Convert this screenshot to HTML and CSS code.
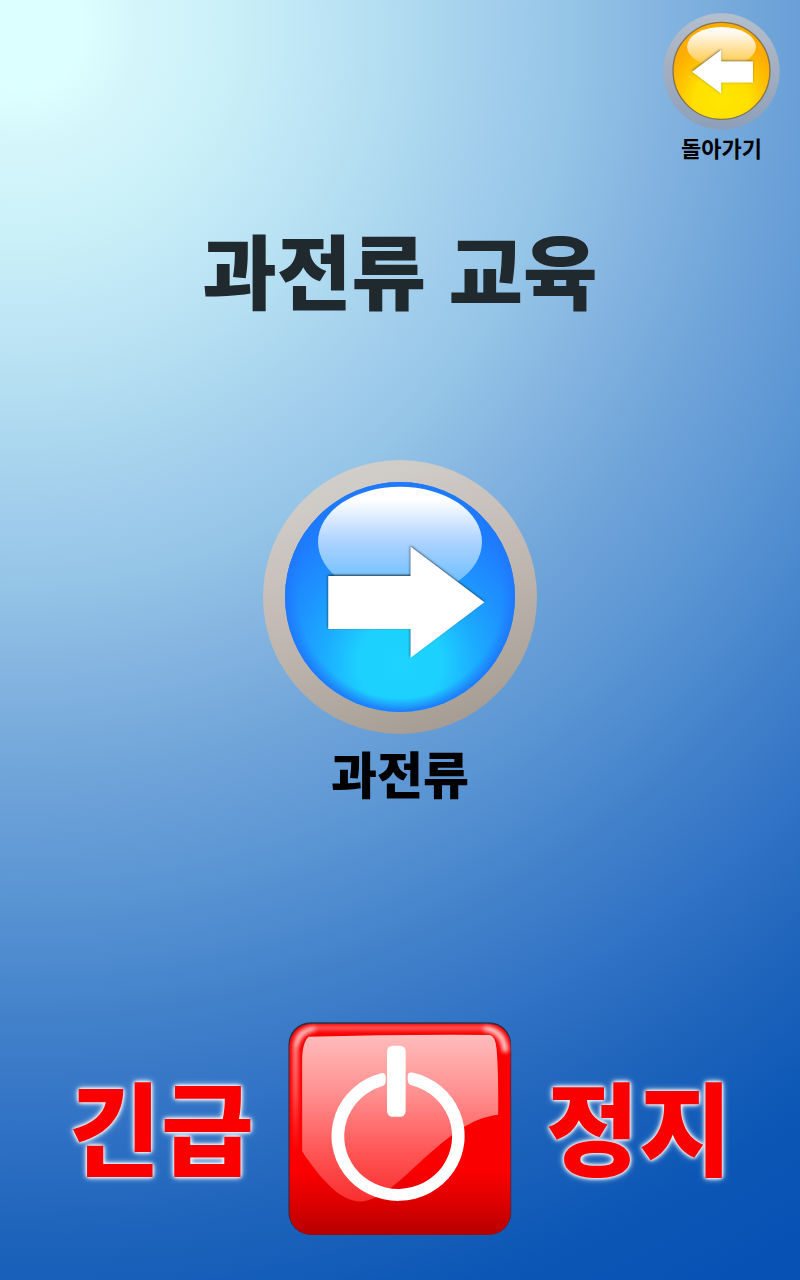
FILE: index.html
```html
<!DOCTYPE html>
<html lang="ko">
<head>
<meta charset="utf-8">
<meta name="viewport" content="width=device-width, initial-scale=1">
<title>과전류 교육</title>
<link rel="stylesheet" href="styles.css">
</head>
<body>
<div class="screen">
  <header class="top">
    <button class="action back" type="button">
      <svg class="back-icon" viewBox="40 38 350 350" aria-hidden="true">
        <defs>
          <linearGradient id="silver" x1="0" y1="0" x2="0" y2="1">
            <stop offset="0" stop-color="#b3bfcd"/><stop offset=".4" stop-color="#a6b1c2"/><stop offset="1" stop-color="#8d9fb9"/>
          </linearGradient>
          <radialGradient id="amber" cx=".5" cy=".8" r=".62">
            <stop offset="0" stop-color="#ffe600"/><stop offset=".45" stop-color="#ffe000"/><stop offset=".75" stop-color="#ffc000"/><stop offset="1" stop-color="#ffac00"/>
          </radialGradient>
          <linearGradient id="amber-gloss" x1="0" y1="0" x2="0" y2="1">
            <stop offset="0" stop-color="#fff"/><stop offset=".2" stop-color="#fff6e6"/><stop offset="1" stop-color="#ffc63c"/>
          </linearGradient>
          <filter id="soft-edge" x="-10%" y="-10%" width="120%" height="120%">
            <feDropShadow dx="-1" dy="-2" stdDeviation="3" flood-color="#5b5236" flood-opacity=".9"/>
          </filter>
        </defs>
        <circle cx="215" cy="213" r="174" fill="url(#silver)"/>
        <circle cx="215" cy="211" r="145" fill="url(#amber)" stroke="#85734c" stroke-width="4"/>
        <ellipse cx="215" cy="139" rx="103" ry="59" fill="url(#amber-gloss)"/>
        <path d="M127 214 214 149V183H309V246H214V279Z" fill="#fff" filter="url(#soft-edge)"/>
      </svg>
      <span class="back-label">돌아가기</span>
    </button>
  </header>

  <h1 class="title">과전류 교육</h1>

  <main class="center">
    <button class="action start" type="button">
      <svg class="start-icon" viewBox="39 30 822 822" aria-hidden="true">
        <defs>
          <linearGradient id="stone" x1=".3" y1="0" x2=".65" y2="1">
            <stop offset="0" stop-color="#d2d0cc"/><stop offset=".42" stop-color="#c5bcb7"/><stop offset=".7" stop-color="#b6aea6"/><stop offset="1" stop-color="#a59b93"/>
          </linearGradient>
          <radialGradient id="azure" cx=".5" cy=".79" r=".66">
            <stop offset="0" stop-color="#1dd3ff"/><stop offset=".28" stop-color="#1dd0ff"/><stop offset=".5" stop-color="#1cacff"/><stop offset=".75" stop-color="#1e90ff"/><stop offset="1" stop-color="#1e7dff"/>
          </radialGradient>
          <radialGradient id="azure-rim">
            <stop offset=".88" stop-color="#1e7dff" stop-opacity="0"/><stop offset="1" stop-color="#1e78fa"/>
          </radialGradient>
          <linearGradient id="azure-gloss" x1="0" y1="0" x2="0" y2="1">
            <stop offset="0" stop-color="#fff"/><stop offset=".12" stop-color="#fff"/><stop offset=".5" stop-color="#acd2ff"/><stop offset="1" stop-color="#58b8ff"/>
          </linearGradient>
          <filter id="arrow-edge" x="-10%" y="-10%" width="120%" height="120%">
            <feDropShadow dx="-1" dy="-3" stdDeviation="3" flood-color="#20303c" flood-opacity="1"/>
          </filter>
        </defs>
        <circle cx="450" cy="441" r="411" fill="url(#stone)"/>
        <circle cx="450" cy="441" r="345" fill="url(#azure)"/>
        <circle cx="450" cy="441" r="345" fill="url(#azure-rim)"/>
        <ellipse cx="450" cy="276" rx="246" ry="166" fill="url(#azure-gloss)"/>
        <path d="M235 378H482V290L703 457 482 623V537H235Z" fill="#fff" filter="url(#arrow-edge)"/>
      </svg>
      <span class="start-label">과전류</span>
    </button>
  </main>

  <footer class="bottom">
    <button class="action stop" type="button">
      <span class="stop-word stop-word-left">긴급</span>
      <svg class="stop-icon" viewBox="54 36 672 640" aria-hidden="true">
        <defs>
          <linearGradient id="red" x1="0" y1="0" x2="0" y2="1">
            <stop offset="0" stop-color="#f90000"/><stop offset=".7" stop-color="#fb0000"/><stop offset=".85" stop-color="#dc0000"/><stop offset="1" stop-color="#b60000"/>
          </linearGradient>
          <linearGradient id="glass" x1="0" y1="0" x2="0" y2="1">
            <stop offset="0" stop-color="#ffbcbc"/><stop offset=".35" stop-color="#ff9090"/><stop offset=".7" stop-color="#ff5656"/><stop offset="1" stop-color="#f92f2f"/>
          </linearGradient>
          <linearGradient id="left-shine" x1="0" y1="60" x2="0" y2="430" gradientUnits="userSpaceOnUse">
            <stop offset="0" stop-color="#ffb0b0"/><stop offset=".5" stop-color="#ff6a6a"/><stop offset="1" stop-color="#ff5050" stop-opacity="0"/>
          </linearGradient>
          <filter id="shine-blur" filterUnits="userSpaceOnUse" x="54" y="36" width="672" height="420"><feGaussianBlur stdDeviation="6"/></filter>
        </defs>
        <rect x="55" y="37" width="669" height="638" rx="66" fill="#2b2940"/>
        <rect x="58" y="42" width="664" height="633" rx="64" fill="url(#red)"/>
        <g fill="none" stroke-linecap="round" filter="url(#shine-blur)">
          <path d="M76 430V120Q76 60 130 56" stroke="url(#left-shine)" stroke-width="14"/>
          <path d="M120 54H650" stroke="#ff7070" stroke-width="12"/>
          <path d="M650 56Q700 64 706 118" stroke="#ffd0d0" stroke-width="18"/>
          <path d="M78 106Q86 66 130 56" stroke="#ffc4c4" stroke-width="14"/>
        </g>
        <path d="M96 425V150Q97 94 116 80 390 73 660 75 676 78 680 115 686 180 685 315C600 325 540 380 480 430 420 480 340 575 270 575 210 575 150 505 96 425Z" fill="url(#glass)"/>
        <path d="M333 190Q346 186 347 200V216Q346 226 335 229A162 158 0 1 0 427 227Q414 224 413 210V198Q413 186 427 188A200 195 0 1 1 333 190Z" fill="#fff"/>
        <rect x="351" y="107" width="56" height="214" rx="17" fill="#fff"/>
      </svg>
      <span class="stop-word stop-word-right">정지</span>
    </button>
  </footer>
</div>
</body>
</html>
```
FILE: styles.css
```css
* {
  box-sizing: border-box;
}

body {
  margin: 0;
  font-family: "Noto Sans CJK KR", sans-serif;
  font-weight: 900;
  color: #000;
}

.screen {
  display: flex;
  flex-direction: column;
  min-height: 100vh;
  padding: 13px 20px 45px;
  background: radial-gradient(circle at 20px 30px,
    #dcffff 0,
    #dcffff 60px,
    #d4f6fb 120px,
    #cbf1f8 200px,
    #c0e7f6 280px,
    #b4def1 360px,
    #a8d4ee 430px,
    #9fcceb 490px,
    #95c5e7 550px,
    #87b6e1 630px,
    #6fa4d9 750px,
    #5994d3 870px,
    #4281ca 990px,
    #3173c5 1090px,
    #1d63bb 1210px,
    #0c57b5 1330px,
    #0751b5 1440px);
}

.action {
  display: flex;
  align-items: center;
  padding: 0;
  border: 0;
  background: none;
  color: inherit;
  font: inherit;
  cursor: pointer;
}

.top {
  display: flex;
  justify-content: flex-end;
}

.back {
  flex-direction: column;
}

.back-icon {
  width: 117px;
  height: 117px;
}

.back-label {
  font-size: 22px;
  line-height: 34px;
  font-weight: 700;
}

.title {
  margin: 54px 0 0;
  font-size: 81px;
  line-height: 100px;
  font-weight: 900;
  text-align: center;
  color: #20292e;
}

.center {
  display: flex;
  flex: 1;
  justify-content: center;
  align-items: flex-start;
  padding-top: 142px;
}

.start {
  flex-direction: column;
}

.start-icon {
  width: 274px;
  height: 274px;
}

.start-label {
  font-size: 50px;
  line-height: 76px;
}

.stop {
  display: grid;
  grid-template-columns: 1fr 224px 1fr;
  column-gap: 34px;
  width: 100%;
}

.stop-icon {
  width: 224px;
  height: 213px;
}

.stop-word {
  padding-bottom: 10px;
  font-size: 101px;
  line-height: 120px;
  white-space: nowrap;
  color: #fb0000;
  text-shadow: 0 0 3px #fff, 0 0 4px #fff, 0 0 7px #fff;
}

.stop-word-left {
  text-align: right;
}

.stop-word-right {
  text-align: left;
}
```
